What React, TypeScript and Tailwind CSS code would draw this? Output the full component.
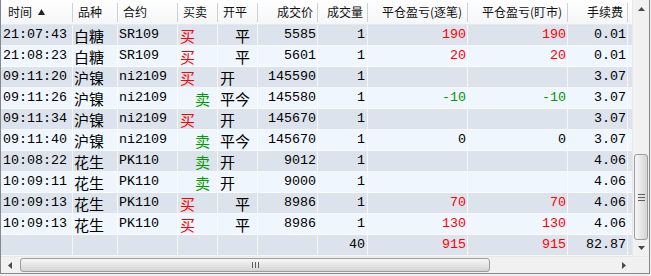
import React from 'react';

type Tone = 'buy' | 'sell' | 'plain';

interface Trade {
  time: string;
  product: string;
  contract: string;
  side: 'buy' | 'sell';
  offset: string;
  price: string;
  qty: string;
  pnlTrade: string;
  pnlMark: string;
  fee: string;
}

const trades: Trade[] = [
  { time: '21:07:43', product: '白糖', contract: 'SR109', side: 'buy', offset: '平', price: '5585', qty: '1', pnlTrade: '190', pnlMark: '190', fee: '0.01' },
  { time: '21:08:23', product: '白糖', contract: 'SR109', side: 'buy', offset: '平', price: '5601', qty: '1', pnlTrade: '20', pnlMark: '20', fee: '0.01' },
  { time: '09:11:20', product: '沪镍', contract: 'ni2109', side: 'buy', offset: '开', price: '145590', qty: '1', pnlTrade: '', pnlMark: '', fee: '3.07' },
  { time: '09:11:26', product: '沪镍', contract: 'ni2109', side: 'sell', offset: '平今', price: '145580', qty: '1', pnlTrade: '-10', pnlMark: '-10', fee: '3.07' },
  { time: '09:11:34', product: '沪镍', contract: 'ni2109', side: 'buy', offset: '开', price: '145670', qty: '1', pnlTrade: '', pnlMark: '', fee: '3.07' },
  { time: '09:11:40', product: '沪镍', contract: 'ni2109', side: 'sell', offset: '平今', price: '145670', qty: '1', pnlTrade: '0', pnlMark: '0', fee: '3.07' },
  { time: '10:08:22', product: '花生', contract: 'PK110', side: 'sell', offset: '开', price: '9012', qty: '1', pnlTrade: '', pnlMark: '', fee: '4.06' },
  { time: '10:09:11', product: '花生', contract: 'PK110', side: 'sell', offset: '开', price: '9000', qty: '1', pnlTrade: '', pnlMark: '', fee: '4.06' },
  { time: '10:09:13', product: '花生', contract: 'PK110', side: 'buy', offset: '平', price: '8986', qty: '1', pnlTrade: '70', pnlMark: '70', fee: '4.06' },
  { time: '10:09:13', product: '花生', contract: 'PK110', side: 'buy', offset: '平', price: '8986', qty: '1', pnlTrade: '130', pnlMark: '130', fee: '4.06' },
];

const toneOf = (v: string): Tone => {
  const n = Number(v);
  if (!v || n === 0) return 'plain';
  return n > 0 ? 'buy' : 'sell';
};

const toneClass: Record<Tone, string> = {
  buy: 'text-[#ff0000]',
  sell: 'text-[#009a00]',
  plain: 'text-black',
};

const mono = "font-['Liberation_Mono','Noto_Sans_CJK_SC',monospace] text-[13.33px]";
const cjk = "font-['Noto_Sans_CJK_SC',sans-serif] text-[15px]";

const headers = [
  { label: '时间', cls: 'w-[72px]', text: 'pl-[7px]', sort: true },
  { label: '品种', cls: 'w-[45px]', text: 'pl-[5px]' },
  { label: '合约', cls: 'w-[60px]', text: 'pl-[5px]' },
  { label: '买卖', cls: 'w-[40px]', text: 'pl-[5px]' },
  { label: '开平', cls: 'w-[40px]', text: 'pl-[5px]' },
  { label: '成交价', cls: 'w-[60px]', text: 'pr-[4px] text-right' },
  { label: '成交量', cls: 'w-[50px]', text: 'pr-[4px] text-right' },
  { label: '平仓盈亏(逐笔)', cls: 'w-[100px]', text: 'pr-[5px] text-right' },
  { label: '平仓盈亏(盯市)', cls: 'w-[100px]', text: 'pr-[5px] text-right' },
  { label: '手续费', cls: 'w-[60px]', text: 'pr-[4px] text-right' },
];

const cell = 'shrink-0 h-full flex items-center border-r border-white/70 whitespace-nowrap leading-none';

const Tri = ({ dir }: { dir: 'up' | 'down' | 'left' | 'right' }) => {
  const pts = {
    up: '0,4 7,4 3.5,0',
    down: '0,0 7,0 3.5,4',
    left: '4,0 4,7 0,3.5',
    right: '0,0 0,7 4,3.5',
  }[dir];
  const vertical = dir === 'up' || dir === 'down';
  return (
    <svg width={vertical ? 7 : 4} height={vertical ? 4 : 7} viewBox={vertical ? '0 0 7 4' : '0 0 4 7'}>
      <polygon points={pts} fill="#4a4a4a" />
    </svg>
  );
};

const Row = ({ t, dark }: { t: Trade; dark: boolean }) => {
  const bg = dark ? 'bg-[#dce3ec]' : 'bg-[#eff6fd]';
  return (
    <div className={`flex h-[21px] border-b border-white/70 ${bg}`}>
      <div className={`${cell} ${mono} w-[72px] pl-[2px]`}>{t.time}</div>
      <div className={`${cell} ${cjk} w-[45px] pl-[1px]`}>{t.product}</div>
      <div className={`${cell} ${mono} w-[60px] pl-[1px]`}>{t.contract}</div>
      <div className={`${cell} ${cjk} w-[40px] ${t.side === 'sell' ? 'pl-[17px] text-[#009a00]' : 'pl-[2px] text-[#ff0000]'}`}>
        {t.side === 'buy' ? '买' : '卖'}
      </div>
      <div className={`${cell} ${cjk} w-[40px] ${t.offset === '平' ? 'pl-[17px]' : 'pl-[2px]'}`}>{t.offset}</div>
      <div className={`${cell} ${mono} w-[60px] justify-end pr-[1px]`}>{t.price}</div>
      <div className={`${cell} ${mono} w-[50px] justify-end pr-[2px]`}>{t.qty}</div>
      <div className={`${cell} ${mono} w-[100px] justify-end pr-[1px] ${toneClass[toneOf(t.pnlTrade)]}`}>{t.pnlTrade}</div>
      <div className={`${cell} ${mono} w-[100px] justify-end pr-[1px] ${toneClass[toneOf(t.pnlMark)]}`}>{t.pnlMark}</div>
      <div className={`${cell} ${mono} w-[60px] justify-end pr-[1px]`}>{t.fee}</div>
      <div className="flex-1" />
    </div>
  );
};

const TotalRow = () => (
  <div className="flex h-[21px] border-b border-white/70 bg-[#dce3ec]">
    <div className={`${cell} w-[72px]`} />
    <div className={`${cell} w-[45px]`} />
    <div className={`${cell} w-[60px]`} />
    <div className={`${cell} w-[40px]`} />
    <div className={`${cell} w-[40px]`} />
    <div className={`${cell} w-[60px]`} />
    <div className={`${cell} ${mono} w-[50px] justify-end pr-[2px]`}>40</div>
    <div className={`${cell} ${mono} w-[100px] justify-end pr-[1px] text-[#ff0000]`}>915</div>
    <div className={`${cell} ${mono} w-[100px] justify-end pr-[1px] text-[#ff0000]`}>915</div>
    <div className={`${cell} ${mono} w-[60px] justify-end pr-[1px]`}>82.87</div>
    <div className="flex-1" />
  </div>
);

export default function App() {
  return (
    <div className="w-[651px] h-[276px] bg-[#f0f0f0] overflow-hidden">
      <div className="w-[650px] h-[274px] flex flex-col border-x border-b border-[#828790] bg-white">
        <div className="flex h-[256px]">
          {/* grid */}
          <div className="w-[631px] flex flex-col">
            <div className="flex h-[25px] bg-linear-to-b from-white to-[#f5f6f8] border-b border-[#e6e9ee]">
              {headers.map(h => (
                <div key={h.label} className={`${h.cls} shrink-0 flex items-center h-full`}>
                  <div className={`flex-1 flex items-center ${h.text} ${h.text.includes('right') ? 'justify-end' : ''} font-['Noto_Sans_CJK_SC',sans-serif] text-[12px] text-[#111] whitespace-nowrap leading-none`}>
                    {h.label}
                    {h.sort && (
                      <svg className="ml-[6px]" width="7" height="6" viewBox="0 0 7 6">
                        <polygon points="0,6 7,6 3.5,0" fill="#222" />
                      </svg>
                    )}
                  </div>
                  <div className="w-px h-[19px] bg-[#cdd1d7]" />
                </div>
              ))}
              <div className="flex-1" />
            </div>
            {trades.map((t, i) => (
              <Row key={i} t={t} dark={i % 2 === 0} />
            ))}
            <TotalRow />
          </div>

          {/* vertical scrollbar */}
          <div className="w-[17px] flex flex-col bg-[#f1f1f1] border-l border-[#e8e8e8]">
            <div className="h-[17px] flex items-center justify-center">
              <Tri dir="up" />
            </div>
            <div className="flex-1" />
            <div className="h-[86px] ml-[1px] mr-[1px] rounded-[3px] border border-[#9c9c9c] bg-linear-to-r from-[#f7f7f7] to-[#d6d6d6] flex flex-col items-center justify-center gap-[2px]">
              <div className="w-[7px] h-px bg-[#5e5e5e]" />
              <div className="w-[7px] h-px bg-[#5e5e5e]" />
              <div className="w-[7px] h-px bg-[#5e5e5e]" />
            </div>
            <div className="h-[16px] flex items-center justify-center">
              <Tri dir="down" />
            </div>
          </div>
        </div>

        {/* horizontal scrollbar */}
        <div className="flex h-[17px] bg-[#f1f1f1] border-t border-[#e8e8e8]">
          <div className="w-[18px] flex items-center justify-center">
            <Tri dir="left" />
          </div>
          <div className="w-[470px] ml-px my-px rounded-[3px] border border-[#9c9c9c] bg-linear-to-b from-[#f7f7f7] to-[#d3d3d3] flex items-center justify-center gap-[2px]">
            <div className="w-px h-[6px] bg-[#5e5e5e]" />
            <div className="w-px h-[6px] bg-[#5e5e5e]" />
            <div className="w-px h-[6px] bg-[#5e5e5e]" />
          </div>
          <div className="flex-1" />
          <div className="w-[17px] flex items-center justify-center">
            <Tri dir="right" />
          </div>
          <div className="w-[17px] bg-[#f0f0f0]" />
        </div>
      </div>
    </div>
  );
}
